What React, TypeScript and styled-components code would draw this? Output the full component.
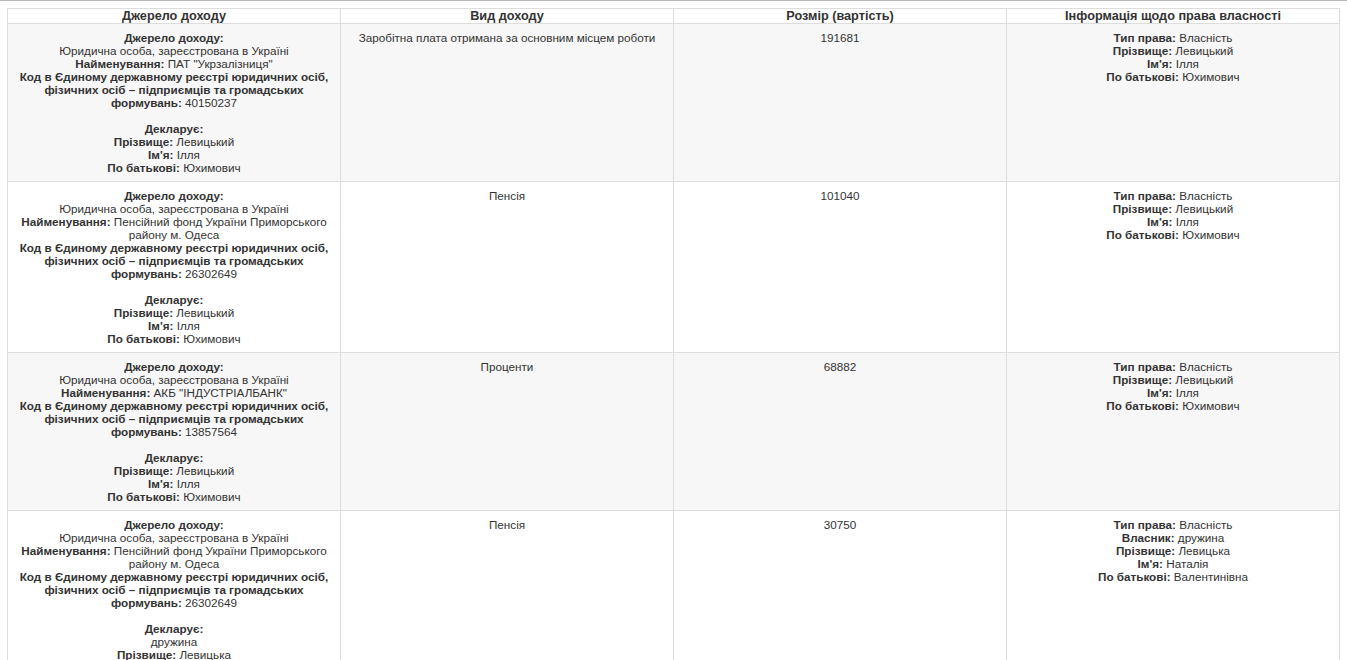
import React from "react";
import styled, { createGlobalStyle } from "styled-components";

const GlobalStyle = createGlobalStyle`
  html, body {
    margin: 0;
    padding: 0;
    background: #ffffff;
  }
  body {
    font-family: "Liberation Sans", Arial, sans-serif;
    color: #333333;
  }
`;

type Field = { label?: string; value?: string; gap?: boolean };

type Row = {
  source: Field[];
  kind: string;
  amount: string;
  rights: Field[];
};

const rows: Row[] = [
  {
    source: [
      { label: "Джерело доходу:" },
      { value: "Юридична особа, зареєстрована в Україні" },
      { label: "Найменування:", value: 'ПАТ "Укрзалізниця"' },
      {
        label: "Код в Єдиному державному реєстрі юридичних осіб, фізичних осіб – підприємців та громадських формувань:",
        value: "40150237",
      },
      { gap: true },
      { label: "Декларує:" },
      { label: "Прізвище:", value: "Левицький" },
      { label: "Ім'я:", value: "Ілля" },
      { label: "По батькові:", value: "Юхимович" },
    ],
    kind: "Заробітна плата отримана за основним місцем роботи",
    amount: "191681",
    rights: [
      { label: "Тип права:", value: "Власність" },
      { label: "Прізвище:", value: "Левицький" },
      { label: "Ім'я:", value: "Ілля" },
      { label: "По батькові:", value: "Юхимович" },
    ],
  },
  {
    source: [
      { label: "Джерело доходу:" },
      { value: "Юридична особа, зареєстрована в Україні" },
      { label: "Найменування:", value: "Пенсійний фонд України Приморського району м. Одеса" },
      {
        label: "Код в Єдиному державному реєстрі юридичних осіб, фізичних осіб – підприємців та громадських формувань:",
        value: "26302649",
      },
      { gap: true },
      { label: "Декларує:" },
      { label: "Прізвище:", value: "Левицький" },
      { label: "Ім'я:", value: "Ілля" },
      { label: "По батькові:", value: "Юхимович" },
    ],
    kind: "Пенсія",
    amount: "101040",
    rights: [
      { label: "Тип права:", value: "Власність" },
      { label: "Прізвище:", value: "Левицький" },
      { label: "Ім'я:", value: "Ілля" },
      { label: "По батькові:", value: "Юхимович" },
    ],
  },
  {
    source: [
      { label: "Джерело доходу:" },
      { value: "Юридична особа, зареєстрована в Україні" },
      { label: "Найменування:", value: 'АКБ "ІНДУСТРІАЛБАНК"' },
      {
        label: "Код в Єдиному державному реєстрі юридичних осіб, фізичних осіб – підприємців та громадських формувань:",
        value: "13857564",
      },
      { gap: true },
      { label: "Декларує:" },
      { label: "Прізвище:", value: "Левицький" },
      { label: "Ім'я:", value: "Ілля" },
      { label: "По батькові:", value: "Юхимович" },
    ],
    kind: "Проценти",
    amount: "68882",
    rights: [
      { label: "Тип права:", value: "Власність" },
      { label: "Прізвище:", value: "Левицький" },
      { label: "Ім'я:", value: "Ілля" },
      { label: "По батькові:", value: "Юхимович" },
    ],
  },
  {
    source: [
      { label: "Джерело доходу:" },
      { value: "Юридична особа, зареєстрована в Україні" },
      { label: "Найменування:", value: "Пенсійний фонд України Приморського району м. Одеса" },
      {
        label: "Код в Єдиному державному реєстрі юридичних осіб, фізичних осіб – підприємців та громадських формувань:",
        value: "26302649",
      },
      { gap: true },
      { label: "Декларує:" },
      { value: "дружина" },
      { label: "Прізвище:", value: "Левицька" },
      { label: "Ім'я:", value: "Наталія" },
      { label: "По батькові:", value: "Валентинівна" },
    ],
    kind: "Пенсія",
    amount: "30750",
    rights: [
      { label: "Тип права:", value: "Власність" },
      { label: "Власник:", value: "дружина" },
      { label: "Прізвище:", value: "Левицька" },
      { label: "Ім'я:", value: "Наталія" },
      { label: "По батькові:", value: "Валентинівна" },
    ],
  },
];

export default function App() {
  return (
    <>
      <GlobalStyle />
      <Page>
        <Table>
          <thead>
            <tr>
              <HeadCell>Джерело доходу</HeadCell>
              <HeadCell>Вид доходу</HeadCell>
              <HeadCell>Розмір (вартість)</HeadCell>
              <HeadCell>Інформація щодо права власності</HeadCell>
            </tr>
          </thead>
          <tbody>
            {rows.map((row, i) => (
              <BodyRow key={i} $striped={i % 2 === 0}>
                <Cell>
                  <Fields items={row.source} />
                </Cell>
                <Cell>{row.kind}</Cell>
                <Cell>{row.amount}</Cell>
                <Cell>
                  <Fields items={row.rights} />
                </Cell>
              </BodyRow>
            ))}
          </tbody>
        </Table>
      </Page>
    </>
  );
}

function Fields({ items }: { items: Field[] }) {
  return (
    <>
      {items.map((f, i) =>
        f.gap ? (
          <Gap key={i} />
        ) : (
          <Line key={i}>
            {f.label && <Label>{f.label}</Label>}
            {f.label && f.value ? " " : null}
            {f.value}
          </Line>
        )
      )}
    </>
  );
}

const Page = styled.div`
  border-top: 1px solid #b8b8b8;
  padding: 7px 7px 0 7px;
`;

const Table = styled.table`
  width: 100%;
  table-layout: fixed;
  border-collapse: collapse;
  border: 1px solid #dddddd;
  font-size: 11.7px;
  line-height: 13px;
  color: #333333;
`;

const HeadCell = styled.th`
  width: 25%;
  border: 1px solid #dddddd;
  padding: 0 4px;
  font-size: 12.7px;
  line-height: 14px;
  font-weight: bold;
  text-align: center;
  background: #ffffff;
  color: #333333;
`;

const BodyRow = styled.tr<{ $striped: boolean }>`
  background: ${(p) => (p.$striped ? "#f7f7f7" : "#ffffff")};
`;

const Cell = styled.td`
  border: 1px solid #dddddd;
  padding: 7px 5px;
  vertical-align: top;
  text-align: center;
`;

const Line = styled.div``;

const Gap = styled.div`
  height: 13px;
`;

const Label = styled.b`
  font-weight: bold;
`;
